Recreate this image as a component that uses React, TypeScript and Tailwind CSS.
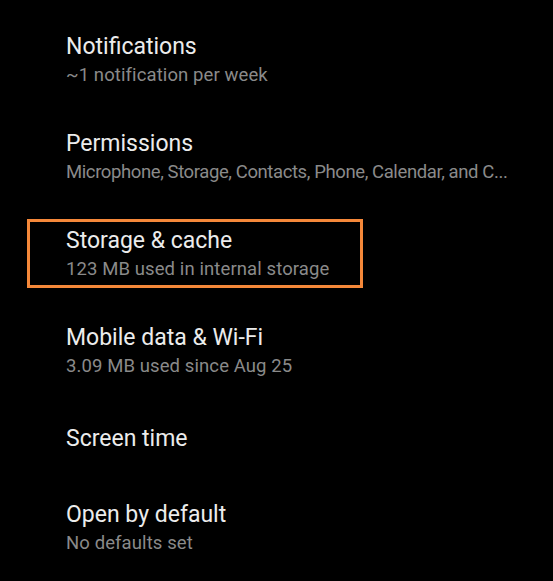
const ITEMS = [
  { title: "Notifications", summary: "~1 notification per week" },
  {
    title: "Permissions",
    summary: "Microphone, Storage, Contacts, Phone, Calendar, and C...",
    tight: true,
  },
  { title: "Storage & cache", summary: "123 MB used in internal storage", highlight: true },
  { title: "Mobile data & Wi-Fi", summary: "3.09 MB used since Aug 25" },
  { title: "Screen time" },
  { title: "Open by default", summary: "No defaults set" },
];

const App = () => {
  return (
    <div className="h-[581px] w-[553px] overflow-hidden bg-black pt-[11px] font-['Roboto',sans-serif]">
      {ITEMS.map((item) => (
        <div
          key={item.title}
          className="relative flex min-h-[80px] flex-col justify-center py-[21px] pl-[66px] pr-[30px]"
        >
          {item.highlight && (
            <div className="pointer-events-none absolute bottom-[14px] left-[27px] top-[14px] w-[336px] border-[3px] border-[#f5883a]" />
          )}
          <p className="text-[23px] leading-[30px] text-[#ececec]">{item.title}</p>
          {item.summary && (
            <p
              className={`mt-[1px] whitespace-nowrap text-[18.5px] leading-[24px] text-[#8a8a8a] ${
                item.tight ? "tracking-[-0.4px]" : "tracking-[0.1px]"
              }`}
            >
              {item.summary}
            </p>
          )}
        </div>
      ))}
    </div>
  );
};

export default App;
